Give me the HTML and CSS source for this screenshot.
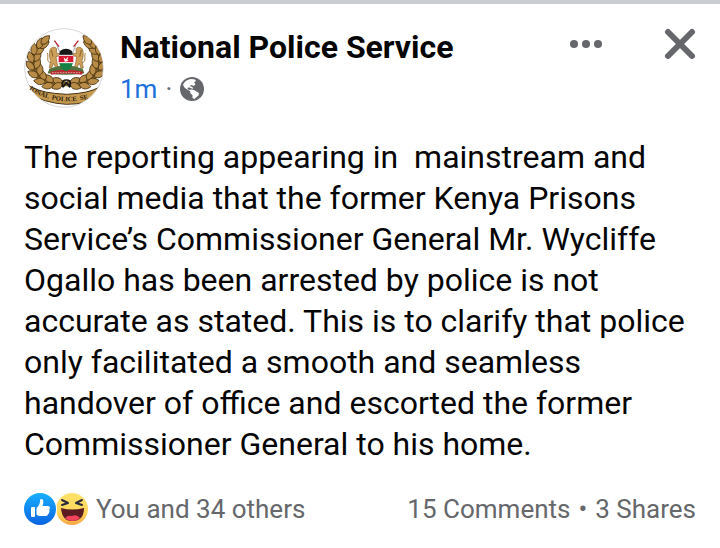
FILE: index.html
```
<!DOCTYPE html>
<html lang="en">
<head>
<meta charset="utf-8">
<meta name="viewport" content="width=device-width, initial-scale=1">
<title>National Police Service</title>
<link rel="stylesheet" href="styles.css">
</head>
<body>
<article class="post">
  <header class="post-header">
    <svg class="avatar" viewBox="0 0 240 240" aria-hidden="true">
      <defs>
        <clipPath id="disc"><circle cx="120" cy="120" r="117"/></clipPath>
        <path id="leaf" d="M0 0C-14-7-15-22-3-35C10-23 12-9 0 0Z" fill="#b88c46" stroke="#4b3512" stroke-width="2.5"/>
        <g id="branch">
          <path d="M126 164C76 178 34 152 29 108C27 74 46 50 70 32" fill="none" stroke="#80602a" stroke-width="20"/>
          <use href="#leaf" transform="translate(116 164) rotate(-65)"/>
          <use href="#leaf" transform="translate(116 168) rotate(-105)"/>
          <use href="#leaf" transform="translate(88 162) rotate(-48)"/>
          <use href="#leaf" transform="translate(88 170) rotate(-95)"/>
          <use href="#leaf" transform="translate(64 156) rotate(-22)"/>
          <use href="#leaf" transform="translate(64 162) rotate(-78)"/>
          <use href="#leaf" transform="translate(47 142) rotate(8)"/>
          <use href="#leaf" transform="translate(43 146) rotate(-58)"/>
          <use href="#leaf" transform="translate(34 122) rotate(26)"/>
          <use href="#leaf" transform="translate(30 126) rotate(-36)"/>
          <use href="#leaf" transform="translate(31 100) rotate(38)"/>
          <use href="#leaf" transform="translate(26 104) rotate(-14)"/>
          <use href="#leaf" transform="translate(35 78) rotate(52)"/>
          <use href="#leaf" transform="translate(30 81) rotate(6)"/>
          <use href="#leaf" transform="translate(45 59) rotate(65)"/>
          <use href="#leaf" transform="translate(42 62) rotate(26)"/>
          <use href="#leaf" transform="translate(52 48) rotate(50)"/>
        </g>
        <g id="lion">
          <path d="M105 56L91 38" stroke="#c51f2c" stroke-width="4"/>
          <path d="M128 124L98 50" stroke="#777" stroke-width="2"/>
          <path d="M78 66C80 57 93 55 98 62L97 75L107 77L107 83L96 86L99 105L103 119L96 120L88 106L83 120L76 120L80 98C76 88 75 75 78 66Z" fill="#cfa05a" stroke="#8c672f" stroke-width="2"/>
          <path d="M80 104C65 101 75 87 70 75" fill="none" stroke="#a57a3b" stroke-width="3"/>
          <path d="M82 66L87 86" stroke="#83602d" stroke-width="3"/>
        </g>
      </defs>
      <circle cx="120" cy="120" r="118" fill="#fff" stroke="#d8d8d8" stroke-width="3"/>
      <g clip-path="url(#disc)">
        <use href="#branch"/>
        <use href="#branch" transform="translate(254 0) scale(-1 1)"/>
        <use href="#lion"/>
        <use href="#lion" transform="translate(254 0) scale(-1 1)"/>
        <path d="M76 122Q125 103 176 122L181 136Q125 145 71 136Z" fill="#52713d"/>
        <path d="M78 131Q127 119 178 131L173 140Q125 133 82 140Z" fill="#b92932"/>
        <path d="M84 134L168 134" stroke="#f0d8c7" stroke-width="2" stroke-dasharray="5 3"/>
        <path d="M108 69Q126 55 144 69L147 84H105Z" fill="#171717"/>
        <path d="M104 82H148V104H104Z" fill="#d71933"/>
        <path d="M105 104H147Q142 123 126 130Q110 123 105 104Z" fill="#168044"/>
        <path d="M104 82H148M105 104H147" stroke="#fff" stroke-width="3"/>
        <path d="M119 88L125 94L133 86L130 96L134 99L122 101Z" fill="#fff"/>
        <path d="M118 178C110 164 118 156 127 156C137 156 144 164 135 178M116 178L127 164L139 178" fill="none" stroke="#171717" stroke-width="5"/>
        <path d="M0 164Q40 192 91 196Q128 202 163 196Q213 190 240 168L240 204Q187 229 127 229Q65 226 0 192Z" fill="#c69a4f" stroke="#453218" stroke-width="3"/>
      </g>
      <path id="motto" d="M15 184Q62 217 127 220Q180 221 234 197" fill="none"/>
      <text class="motto"><textPath href="#motto">IONAL  POLICE  SE</textPath></text>
    </svg>
    <div class="identity">
      <h1 class="name">National Police Service</h1>
      <div class="meta">
        <a class="time" href="#">1m</a>
        <span class="dot">·</span>
        <svg class="globe" viewBox="0 0 24 24" role="img" aria-label="Public">
          <circle cx="12" cy="12" r="12" fill="#65676b"/>
          <path d="M3 8C4 5 7 2.500 11.500 2L15 2.500L16 4L14 5.500L15.500 7L14 9L11.500 8L9.500 9L12.500 10L13 12L9.500 10.500L8 10.500L7.500 12L9 13L11 12.500L14 13L16.500 14.500L19 16L18.500 18.500L16 20.500L14.500 22L12.500 21L12.500 18L10.500 16.500L10 14L7 12.500L4.500 10.500Z" fill="#fff"/>
        </svg>
      </div>
    </div>
    <div class="actions">
      <button class="icon-button" type="button" aria-label="More options">
        <svg class="more" viewBox="0 0 32 8"><circle cx="4" cy="4" r="4"/><circle cx="16" cy="4" r="4"/><circle cx="28" cy="4" r="4"/></svg>
      </button>
      <button class="icon-button" type="button" aria-label="Close">
        <svg class="close" viewBox="0 0 32 32"><path d="M4 4L28 28M28 4L4 28"/></svg>
      </button>
    </div>
  </header>
  <p class="message">The reporting appearing in&nbsp; mainstream and social media that the former Kenya Prisons Service’s Commissioner General Mr. Wycliffe Ogallo has been arrested by police is not accurate as stated. This is to clarify that police only facilitated a smooth and seamless handover of office and escorted the former Commissioner General to his home.</p>
  <footer class="summary">
    <a class="reactions" href="#">
      <svg class="faces" viewBox="0 0 64 32" aria-hidden="true">
        <defs>
          <linearGradient id="blue" x2="0" y2="1"><stop stop-color="#18affe"/><stop offset="1" stop-color="#0b63e4"/></linearGradient>
          <linearGradient id="yellow" x2="0" y2="1"><stop stop-color="#ffe36a"/><stop offset=".65" stop-color="#fed45b"/><stop offset="1" stop-color="#f5a443"/></linearGradient>
        </defs>
        <circle cx="48" cy="16" r="16" fill="url(#yellow)"/>
        <path d="M37 15Q48 18 60 15Q60 28 48 28Q38 28 37 15Z" fill="#5b1b20"/>
        <path d="M41 25Q44 22 48 23Q53 21 56 25Q53 28 48 28Q44 28 41 25Z" fill="#f2435c"/>
        <path d="M38 7L44 10L38 12M58 7L52 10L58 12" fill="none" stroke="#2b2c3b" stroke-width="2" stroke-linecap="round" stroke-linejoin="round"/>
        <circle cx="16" cy="16" r="17" fill="#fff"/>
        <circle cx="16" cy="16" r="16" fill="url(#blue)"/>
        <rect x="7" y="14" width="4" height="10" rx="1" fill="#fff"/>
        <path d="M12.500 15C14.500 13 16 11 16 8V7Q16 6 17.500 6C20 6 19.500 10 18.500 13H24Q26 13 26 15Q26 16 25 17Q26 18 25 20Q25 21 24 21Q24 23 22 23H16Q14 23 12.500 21.500Z" fill="#fff"/>
      </svg>
      <span>You and 34 others</span>
    </a>
    <a class="counts" href="#"><span>15 Comments</span><span>•</span><span>3 Shares</span></a>
  </footer>
</article>
</body>
</html>
```
FILE: styles.css
```
* { box-sizing: border-box; }
body {
  margin: 0;
  background: #fff;
  color: #050505;
  font-family: Roboto, "Liberation Sans", sans-serif;
}
a { color: inherit; text-decoration: none; }
svg { display: block; flex: none; }
.post { padding: 24px; border-top: 4px solid #c9ccd1; }
.post-header { display: flex; gap: 16px; }
.avatar { width: 80px; height: 80px; }
.identity { flex: 1; }
.name { margin: 0; font-size: 32px; line-height: 38px; font-weight: 700; }
.meta {
  display: flex;
  align-items: center;
  gap: 8px;
  margin-top: 5px;
  font-size: 26px;
  line-height: 36px;
  color: #65676b;
}
.time { color: #216fdb; }
.globe { width: 24px; height: 24px; }
.actions { display: flex; align-items: flex-start; gap: 62px; }
.icon-button {
  display: grid;
  place-items: center;
  height: 32px;
  margin: 0;
  padding: 0;
  border: 0;
  background: none;
}
.more { width: 32px; height: 8px; fill: #65676b; }
.close { width: 32px; height: 32px; stroke: #65676b; stroke-width: 6; stroke-linecap: round; }
.message { margin: 29px 0 28px; font-size: 32px; line-height: 41px; }
.summary {
  display: flex;
  justify-content: space-between;
  align-items: center;
  font-size: 26px;
  line-height: 32px;
  color: #65676b;
}
.reactions { display: flex; align-items: center; gap: 8px; }
.counts { display: flex; gap: 8px; }
.faces { width: 64px; height: 32px; }
.motto {
  font-family: "Liberation Serif", serif;
  font-size: 20px;
  font-weight: 700;
  fill: #302310;
  white-space: pre;
}
```
